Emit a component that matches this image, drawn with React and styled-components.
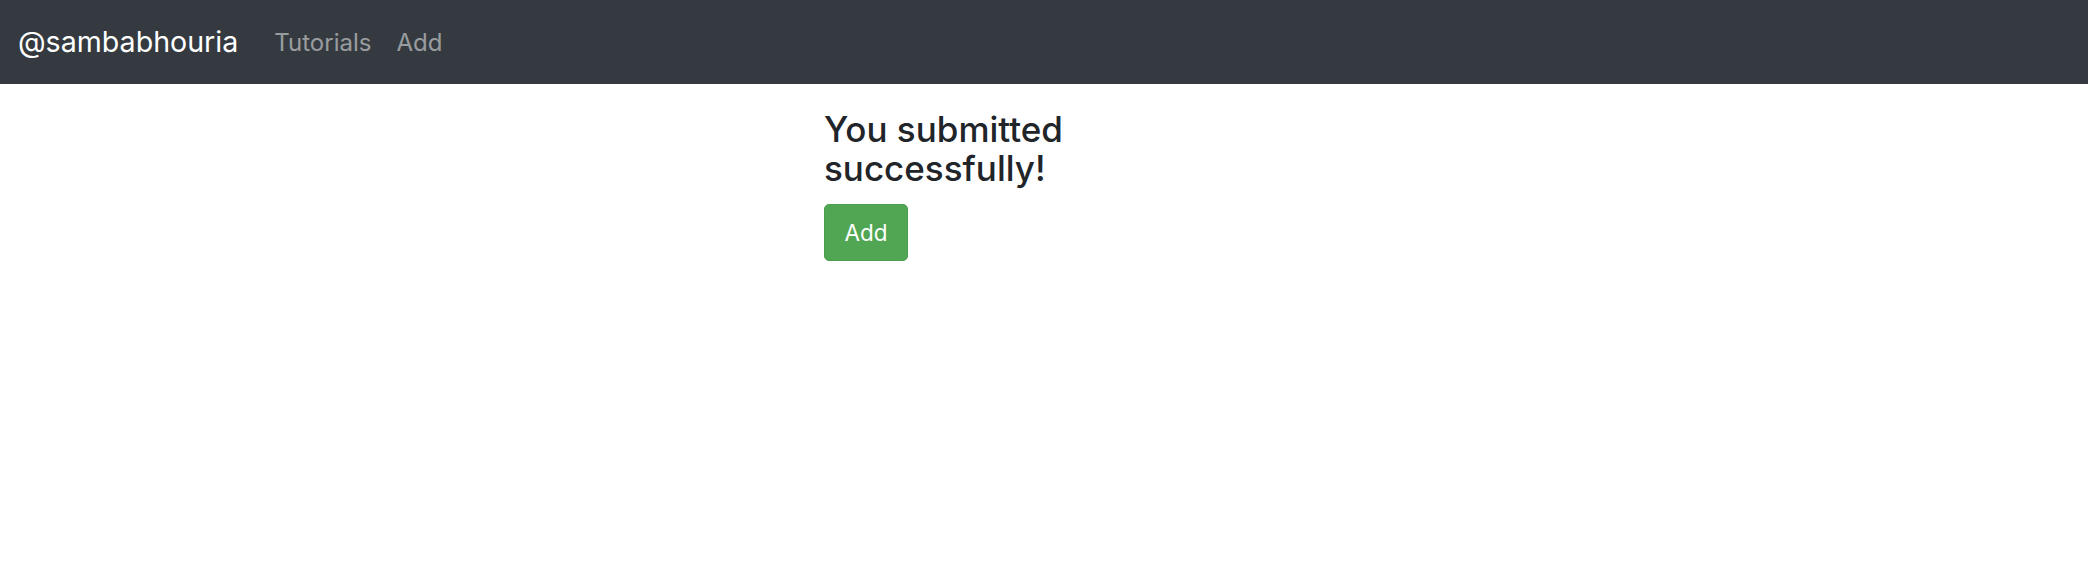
import React from "react";
import styled, { createGlobalStyle } from "styled-components";

const Global = createGlobalStyle`
  html, body { margin: 0; padding: 0; background: #fff; }
  body {
    font-family: Inter, "Noto Sans", "Liberation Sans", sans-serif;
    color: #212529;
  }
  * { box-sizing: border-box; }
`;

const Navbar = styled.nav`
  height: 84px;
  background: #343a40;
  display: flex;
  align-items: center;
  padding: 0 21px 0 18px;
`;

const Brand = styled.a`
  font-size: 28.6px;
  line-height: 1.5;
  color: #fff;
  text-decoration: none;
  margin-right: 36px;
`;

const NavList = styled.ul`
  display: flex;
  list-style: none;
  margin: 0;
  padding: 2px 0 0;
  gap: 25px;
`;

const NavLink = styled.a`
  font-size: 24px;
  line-height: 1.5;
  color: rgba(255, 255, 255, 0.5);
  text-decoration: none;
`;

const Main = styled.main`
  width: 440px;
  margin: 26px auto 0;
`;

const Heading = styled.h4`
  max-width: 340px;
  font-size: 35px;
  font-weight: 450;
  line-height: 39px;
  margin: 0 0 16px;
  color: #212529;
`;

const Button = styled.button`
  width: 84px;
  height: 57px;
  background: #51a653;
  border: 1px solid #4a9e4c;
  border-radius: 5px;
  color: #fff;
  font-family: inherit;
  font-size: 22.5px;
  line-height: 1.5;
  cursor: pointer;
  padding: 0;
`;

export default function App() {
  return (
    <>
      <Global />
      <Navbar>
        <Brand href="#">@sambabhouria</Brand>
        <NavList>
          <li><NavLink href="#">Tutorials</NavLink></li>
          <li><NavLink href="#">Add</NavLink></li>
        </NavList>
      </Navbar>
      <Main>
        <Heading>You submitted successfully!</Heading>
        <Button>Add</Button>
      </Main>
    </>
  );
}
